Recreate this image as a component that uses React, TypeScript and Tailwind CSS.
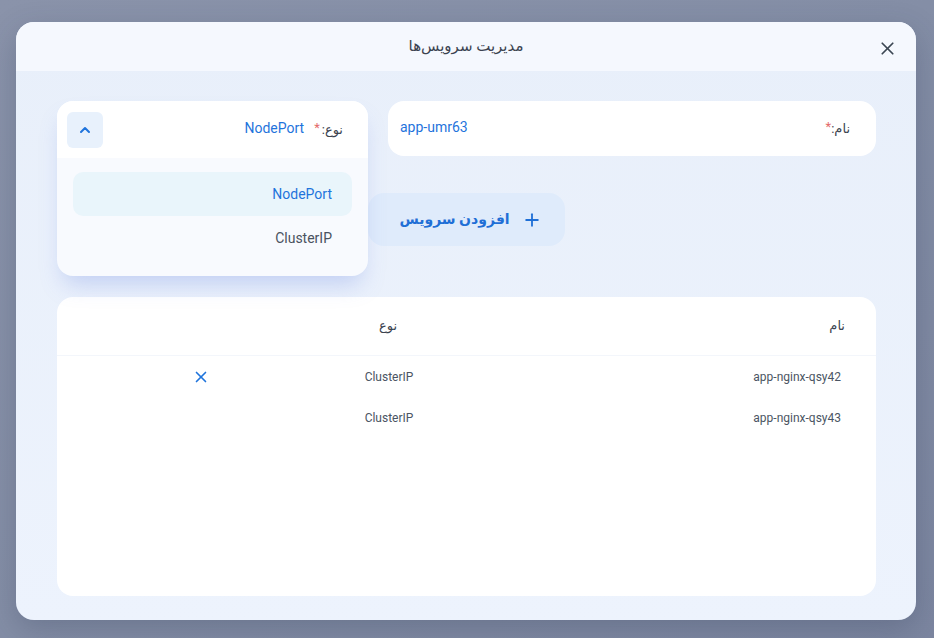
import React, { useState } from 'react';
import { X, Plus, ChevronUp } from 'lucide-react';

type Service = { name: string; type: string; removable?: boolean };

const services: Service[] = [
    { name: 'app-nginx-qsy42', type: 'ClusterIP', removable: true },
    { name: 'app-nginx-qsy43', type: 'ClusterIP' },
];

const typeOptions = ['NodePort', 'ClusterIP'];

export default function App() {
    const [name] = useState('app-umr63');
    const [type, setType] = useState('NodePort');
    const [open] = useState(true);

    return (
        <div
            className="min-h-screen w-full bg-[#8790a8] bg-gradient-to-br from-[#8a93aa] via-[#848ea6] to-[#7c86a0] pl-[16px] pt-[22px]"
            style={{ fontFamily: "Roboto, 'DejaVu Sans', 'Noto Sans', sans-serif" }}
        >
            <div
                dir="rtl"
                className="w-[900px] h-[598px] rounded-[18px] overflow-hidden flex flex-col bg-gradient-to-b from-[#e8effa] to-[#edf3fd] shadow-[0_10px_30px_rgba(40,50,80,0.25)]"
            >
                {/* Header */}
                <div className="h-[49px] shrink-0 bg-[#f5f8fe] grid grid-cols-[1fr_auto_1fr] items-center">
                    <div className="flex pr-[18px] pt-[4px]">
                        <button className="text-[#3c4653]">
                            <X size={21} strokeWidth={2} />
                        </button>
                    </div>
                    <h1 className="text-[15px] text-[#3b4350]">مدیریت سرویس‌ها</h1>
                    <div />
                </div>

                {/* Body */}
                <div className="flex-1 flex flex-col pt-[30px] pr-[40px] pl-[41px] pb-[24px]">
                    {/* Form row */}
                    <div className="flex gap-[20px]">
                        <div className="w-[488px] h-[55px] bg-white rounded-[16px] flex items-center justify-between pr-[26px] pl-[12px]">
                            <label className="text-[13px] text-[#3b4350] flex items-center">
                                نام:<span className="text-[#e46a6a] -mt-[4px]">*</span>
                            </label>
                            <span dir="ltr" className="text-[14px] text-[#1f74dc] -mt-[2px]">{name}</span>
                        </div>

                        <div className="relative w-[311px] h-[57px]">
                            <div className="absolute inset-x-0 top-0 z-10 rounded-[16px] bg-[#f8fafe] shadow-[0_14px_22px_-6px_rgba(120,145,230,0.35)] overflow-hidden">
                                <div className="h-[57px] bg-white flex items-center pr-[25px] pl-[10px]">
                                    <label className="text-[13px] text-[#3b4350] flex items-center">
                                        نوع:<span className="text-[#e46a6a] -mt-[4px] mr-[2px]">*</span>
                                    </label>
                                    <span className="text-[14px] text-[#1f74dc] mr-[10px] -mt-[2px]">{type}</span>
                                    <button className="mr-auto w-[36px] h-[36px] rounded-[6px] bg-[#e8f1fc] flex items-center justify-center text-[#1f74dc]">
                                        <ChevronUp size={16} strokeWidth={3} />
                                    </button>
                                </div>
                                {open && (
                                    <ul className="px-[16px] pt-[14px] pb-[16px]">
                                        {typeOptions.map((opt) => (
                                            <li
                                                key={opt}
                                                onClick={() => setType(opt)}
                                                className={
                                                    opt === type
                                                        ? 'h-[44px] rounded-[10px] bg-[#e9f5fb] flex items-center pr-[20px] text-[14px] text-[#1f74dc] cursor-pointer'
                                                        : 'h-[44px] rounded-[10px] flex items-center pr-[20px] text-[14px] text-[#4a5260] cursor-pointer'
                                                }
                                            >
                                                {opt}
                                            </li>
                                        ))}
                                    </ul>
                                )}
                            </div>
                        </div>
                    </div>

                    {/* Add button */}
                    <div className="flex mt-[37px] mr-[311px]">
                        <button className="w-[197px] h-[53px] -mt-[2px] rounded-[16px] bg-[#dfebfb] flex items-center justify-center gap-[12px] pl-[8px] text-[#1f6fd6]">
                            <Plus size={20} strokeWidth={2.2} />
                            <span className="text-[14px] font-bold">افزودن سرویس</span>
                        </button>
                    </div>

                    {/* Services table */}
                    <div className="mt-[51px] flex-1 bg-white rounded-[16px] overflow-hidden">
                        <div className="h-[59px] grid grid-cols-[387px_200px_1fr] items-center border-b border-[#f3f6fb] text-[13px] text-[#3b4350]">
                            <div className="pr-[31px]">نام</div>
                            <div className="text-center pr-[2px]">نوع</div>
                            <div />
                        </div>
                        {services.map((s) => (
                            <div key={s.name} className="h-[41px] grid grid-cols-[387px_200px_1fr] items-center text-[12px] text-[#4b5563]">
                                <div className="pr-[35px]">
                                    <span dir="ltr">{s.name}</span>
                                </div>
                                <div className="text-center">{s.type}</div>
                                <div className="flex pr-[79px]">
                                    {s.removable && (
                                        <button className="text-[#1f74dc]">
                                            <X size={18} strokeWidth={2.2} />
                                        </button>
                                    )}
                                </div>
                            </div>
                        ))}
                    </div>
                </div>
            </div>
        </div>
    );
}
